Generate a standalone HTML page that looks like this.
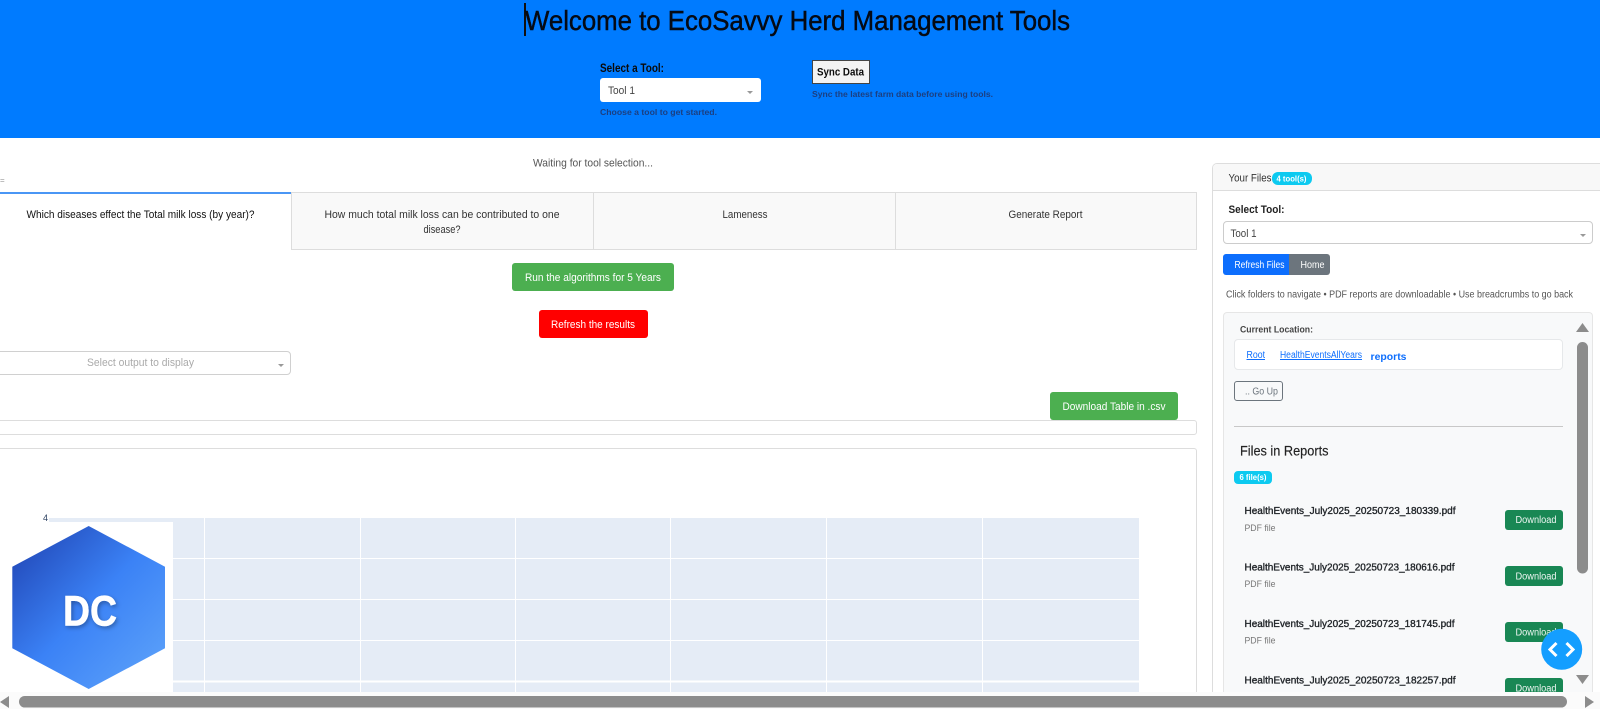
<!DOCTYPE html>
<html lang="en"><head><meta charset="utf-8"><title>EcoSavvy Herd Management Tools</title>
<style>
html,body{margin:0;padding:0;width:1600px;height:709px;overflow:hidden;background:#fff}
#root{position:relative;width:1600px;height:709px;overflow:hidden;contain:paint}
#root div,#root svg{position:absolute;box-sizing:border-box}
text{font-family:"Liberation Sans",sans-serif}
.tab{background:#f9f9f9;border:1px solid #ddd;top:192px;height:58px}
.btn{border-radius:3px}
.dl{left:1505px;width:58px;background:#198754;border-radius:3px}
.arrow{width:0;height:0;border-left:3px solid transparent;border-right:3px solid transparent;border-top:3px solid #999}
</style></head><body>
<div id="root">
<div style="left:0;top:0;width:1600px;height:138px;background:#007bff"></div>
<div style="left:524px;top:3px;width:1.5px;height:33px;background:#111"></div>
<div style="left:600px;top:78px;width:161px;height:24px;background:#fff;border-radius:3px"></div>
<div class="arrow" style="left:747px;top:91px"></div>
<div style="left:812px;top:59.5px;width:58px;height:24px;background:#f3f3f3;border:1px solid #444"></div>

<div style="left:0;top:192px;width:291px;height:58px;border-top:2px solid #4a96f5"></div>
<div class="tab" style="left:291px;width:303px"></div>
<div class="tab" style="left:593px;width:303px"></div>
<div class="tab" style="left:895px;width:302px"></div>

<div class="btn" style="left:512px;top:263px;width:162px;height:28px;background:#4caf50"></div>
<div class="btn" style="left:539px;top:310px;width:109px;height:28px;background:#f00"></div>
<div style="left:-5px;top:351px;width:296px;height:24px;background:#fff;border:1px solid #d0d0d0;border-radius:4px"></div>
<div class="arrow" style="left:278px;top:364px"></div>

<div style="left:-5px;top:420px;width:1202px;height:15px;border:1px solid #ddd;border-radius:3px"></div>
<div class="btn" style="left:1050px;top:392px;width:128px;height:28px;background:#4caf50"></div>
<div style="left:-5px;top:448px;width:1202px;height:261px;border:1px solid #ddd;border-bottom:0;border-radius:3px 3px 0 0"></div>

<svg style="left:0;top:0" width="1600" height="709" viewBox="0 0 1600 709">
<rect x="49" y="518" width="1090" height="175" fill="#e5ecf6"/>
<g stroke="#fff" stroke-width="1">
<path d="M204.5 518V693M360.5 518V693M515.5 518V693M670.5 518V693M826.5 518V693M982.5 518V693"/>
<path d="M49 558.5H1139M49 599.5H1139M49 640.5H1139"/>
<path d="M49 681.5H1139" stroke-width="2"/>
</g>
</svg>

<div style="left:0;top:522px;width:173px;height:171px;background:#fff"></div>
<svg style="left:0;top:520px" width="175" height="175" viewBox="0 520 175 175">
<defs><linearGradient id="g" x1="0" y1="0" x2="1" y2="1"><stop offset="0" stop-color="#1e40af"/><stop offset=".5" stop-color="#3b82f6"/><stop offset="1" stop-color="#60a5fa"/></linearGradient>
<filter id="s" x="-30%" y="-30%" width="160%" height="160%"><feDropShadow dx="1.5" dy="2" stdDeviation="2" flood-color="#000" flood-opacity=".3"/></filter></defs>
<polygon points="88.7,526 165,566.7 165,648.3 88.7,689 12.3,648.3 12.3,566.7" fill="url(#g)"/>
<text x="63" y="625.5" font-size="43" font-weight="700" fill="#fff" stroke="#fff" stroke-width=".5" textLength="54" lengthAdjust="spacingAndGlyphs" filter="url(#s)">DC</text>
</svg>

<div style="left:1212px;top:163px;width:388px;height:546px;border:1px solid #ddd;border-right:0;border-bottom:0;border-radius:5px 0 0 0;background:#fff"></div>
<div style="left:1213px;top:164px;width:387px;height:27px;background:#f8f8f8;border-bottom:1px solid #ddd;border-radius:4px 0 0 0"></div>
<div style="left:1272px;top:172px;width:40px;height:13px;background:#0dcaf0;border-radius:6px"></div>
<div style="left:1223px;top:221px;width:370px;height:23px;border:1px solid #ccc;border-radius:4px;background:#fff"></div>
<div class="arrow" style="left:1580px;top:234px"></div>
<div style="left:1223px;top:254px;width:66px;height:21px;background:#0d6efd;border-radius:3px 0 0 3px"></div>
<div style="left:1289px;top:254px;width:41px;height:21px;background:#6c757d;border-radius:0 3px 3px 0"></div>
<div style="left:1223px;top:312px;width:370px;height:397px;background:#f8f9fa;border:1px solid #e6e6e6;border-bottom:0;border-radius:4px 4px 0 0"></div>
<div style="left:1234px;top:339px;width:329px;height:31px;background:#fff;border:1px solid #e6e8ea;border-radius:4px"></div>
<div style="left:1234px;top:381px;width:49px;height:20px;border:1px solid #6c757d;border-radius:3px"></div>
<div style="left:1234px;top:426px;width:329px;height:1px;background:#c8c8c8"></div>
<div style="left:1234px;top:471px;width:38px;height:12.5px;background:#0dcaf0;border-radius:4px"></div>
<div class="dl" style="top:510px;height:19.5px"></div>
<div class="dl" style="top:566px;height:20px"></div>
<div class="dl" style="top:622px;height:20px"></div>
<div class="dl" style="top:678px;height:20px"></div>

<svg style="left:0;top:0" width="1600" height="709" viewBox="0 0 1600 709">
<text x="525" y="30" font-size="28" fill="#050a14" stroke="#050a14" stroke-width=".45" textLength="545" lengthAdjust="spacingAndGlyphs">Welcome to EcoSavvy Herd Management Tools</text>
<text x="600" y="72" font-size="11.5" font-weight="700" fill="#0a0a0a" textLength="64" lengthAdjust="spacingAndGlyphs">Select a Tool:</text>
<text x="608" y="94" font-size="11" fill="#444" textLength="27" lengthAdjust="spacingAndGlyphs">Tool 1</text>
<text x="600" y="115" font-size="8.5" font-weight="700" fill="#1c3f80" textLength="117" lengthAdjust="spacingAndGlyphs">Choose a tool to get started.</text>
<text x="817" y="75.5" font-size="11" font-weight="700" fill="#0a0a0a" textLength="47" lengthAdjust="spacingAndGlyphs">Sync Data</text>
<text x="812" y="97" font-size="8.5" font-weight="700" fill="#1c3f80" textLength="181" lengthAdjust="spacingAndGlyphs">Sync the latest farm data before using tools.</text>

<text x="533" y="166.5" font-size="11" fill="#555" textLength="120" lengthAdjust="spacingAndGlyphs">Waiting for tool selection...</text>
<text x="0" y="183" font-size="8" fill="#999">=</text>

<text x="140.5" y="218" font-size="11" fill="#111" text-anchor="middle" textLength="228" lengthAdjust="spacingAndGlyphs">Which diseases effect the Total milk loss (by year)?</text>
<text x="442" y="218" font-size="11" fill="#333" text-anchor="middle" textLength="235" lengthAdjust="spacingAndGlyphs">How much total milk loss can be contributed to one</text>
<text x="442" y="233" font-size="11" fill="#333" text-anchor="middle" textLength="37" lengthAdjust="spacingAndGlyphs">disease?</text>
<text x="745" y="218" font-size="11" fill="#333" text-anchor="middle" textLength="45" lengthAdjust="spacingAndGlyphs">Lameness</text>
<text x="1045.5" y="218" font-size="11" fill="#333" text-anchor="middle" textLength="74" lengthAdjust="spacingAndGlyphs">Generate Report</text>

<text x="593" y="281" font-size="11" fill="#fff" text-anchor="middle" textLength="136" lengthAdjust="spacingAndGlyphs">Run the algorithms for 5 Years</text>
<text x="593" y="328" font-size="11" fill="#fff" text-anchor="middle" textLength="84" lengthAdjust="spacingAndGlyphs">Refresh the results</text>
<text x="140.5" y="366" font-size="11" fill="#aaa" text-anchor="middle" textLength="107" lengthAdjust="spacingAndGlyphs">Select output to display</text>
<text x="1114" y="410" font-size="11" fill="#fff" text-anchor="middle" textLength="103" lengthAdjust="spacingAndGlyphs">Download Table in .csv</text>
<text x="43" y="521" font-size="9" fill="#2a3f5f">4</text>

<text x="1228.5" y="181.5" font-size="11" fill="#333" textLength="43" lengthAdjust="spacingAndGlyphs">Your Files</text>
<text x="1276.5" y="181.5" font-size="8" font-weight="700" fill="#fff" textLength="30" lengthAdjust="spacingAndGlyphs">4 tool(s)</text>
<text x="1228.5" y="213" font-size="11" font-weight="700" fill="#222" textLength="56" lengthAdjust="spacingAndGlyphs">Select Tool:</text>
<text x="1230.5" y="237" font-size="11" fill="#444" textLength="26" lengthAdjust="spacingAndGlyphs">Tool 1</text>
<text x="1234.5" y="268" font-size="10" fill="#fff" textLength="50" lengthAdjust="spacingAndGlyphs">Refresh Files</text>
<text x="1300.5" y="268" font-size="10" fill="#fff" textLength="24" lengthAdjust="spacingAndGlyphs">Home</text>
<text x="1226" y="297.5" font-size="10" fill="#555" textLength="347" lengthAdjust="spacingAndGlyphs">Click folders to navigate • PDF reports are downloadable • Use breadcrumbs to go back</text>
<text x="1240" y="332.5" font-size="9.5" font-weight="700" fill="#444" textLength="73" lengthAdjust="spacingAndGlyphs">Current Location:</text>
<text x="1246.5" y="358" font-size="10" fill="#0d6efd" text-decoration="underline" textLength="18.5" lengthAdjust="spacingAndGlyphs">Root</text>
<text x="1280" y="358" font-size="10" fill="#0d6efd" text-decoration="underline" textLength="82" lengthAdjust="spacingAndGlyphs">HealthEventsAllYears</text>
<text x="1370.5" y="360" font-size="10.5" font-weight="700" fill="#0d6efd" textLength="36" lengthAdjust="spacingAndGlyphs">reports</text>
<text x="1245" y="394.5" font-size="10" fill="#6c757d" textLength="33" lengthAdjust="spacingAndGlyphs">.. Go Up</text>
<text x="1240" y="455.5" font-size="13.5" fill="#222" stroke="#222" stroke-width=".15" textLength="88.5" lengthAdjust="spacingAndGlyphs">Files in Reports</text>
<text x="1239.5" y="480" font-size="8" font-weight="700" fill="#fff" textLength="27" lengthAdjust="spacingAndGlyphs">6 file(s)</text>

<g font-size="10.5" fill="#212529" stroke="#212529" stroke-width=".35">
<text x="1244.5" y="514" textLength="211" lengthAdjust="spacingAndGlyphs">HealthEvents_July2025_20250723_180339.pdf</text>
<text x="1244.5" y="570.5" textLength="210" lengthAdjust="spacingAndGlyphs">HealthEvents_July2025_20250723_180616.pdf</text>
<text x="1244.5" y="627" textLength="210" lengthAdjust="spacingAndGlyphs">HealthEvents_July2025_20250723_181745.pdf</text>
<text x="1244.5" y="683.5" textLength="211" lengthAdjust="spacingAndGlyphs">HealthEvents_July2025_20250723_182257.pdf</text>
</g>
<g font-size="9.5" fill="#777">
<text x="1244.5" y="531" textLength="31" lengthAdjust="spacingAndGlyphs">PDF file</text>
<text x="1244.5" y="587" textLength="31" lengthAdjust="spacingAndGlyphs">PDF file</text>
<text x="1244.5" y="643.5" textLength="31" lengthAdjust="spacingAndGlyphs">PDF file</text>
</g>
<g font-size="10" fill="#fff" opacity=".92">
<text x="1515.5" y="523" textLength="41" lengthAdjust="spacingAndGlyphs">Download</text>
<text x="1515.5" y="579.5" textLength="41" lengthAdjust="spacingAndGlyphs">Download</text>
<text x="1515.5" y="635.5" textLength="41" lengthAdjust="spacingAndGlyphs">Download</text>
<text x="1515.5" y="691.5" textLength="41" lengthAdjust="spacingAndGlyphs">Download</text>
</g>
</svg>

<svg style="left:0;top:0" width="1600" height="709" viewBox="0 0 1600 709">
<polygon points="1582.5,323 1589,332 1576,332" fill="#8c8c8c"/>
<rect x="1577" y="342" width="11" height="231.5" rx="5.5" fill="#8c8c8c"/>
<polygon points="1576,675 1589,675 1582.5,684" fill="#8c8c8c"/>
<rect x="0" y="692" width="1600" height="17" fill="#fbfbfb"/>
<polygon points="0,702 9,696 9,708" fill="#8c8c8c"/>
<rect x="19" y="696" width="1548" height="11.5" rx="5.75" fill="#8c8c8c"/>
<polygon points="1585,696 1594,702 1585,708" fill="#8c8c8c"/>
<circle cx="1561.7" cy="649.3" r="20.5" fill="#149eff"/>
<path d="M1556.5 643L1550 649.5L1556.5 656M1566.5 643L1573 649.5L1566.5 656" fill="none" stroke="#fff" stroke-width="3"/>
</svg>
</div>
</body></html>
